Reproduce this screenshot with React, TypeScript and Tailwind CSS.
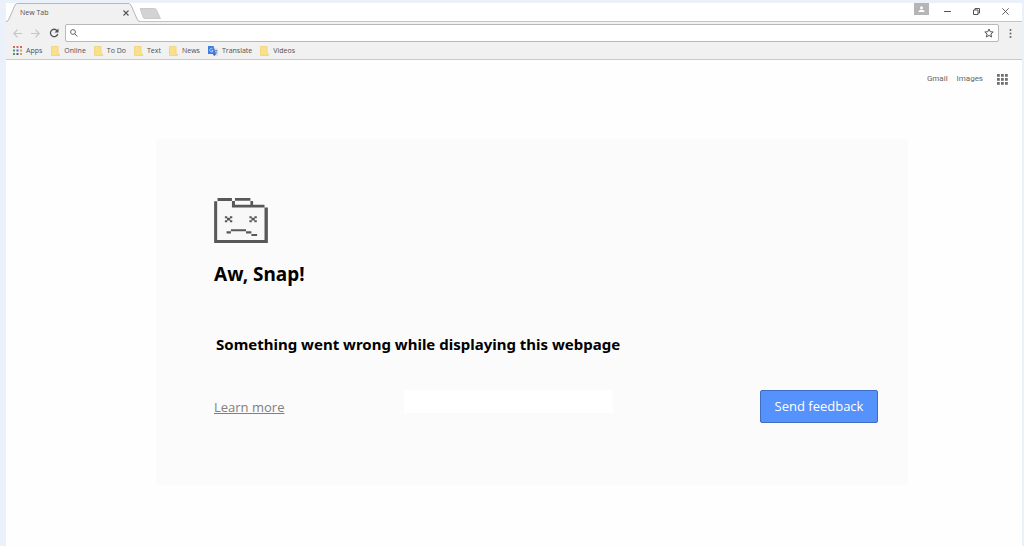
import React from "react";

const bookmarks = ["Online", "To Do", "Text", "News"];

function FolderIcon() {
  return (
    <svg width="9" height="10" viewBox="0 0 9 10" aria-hidden="true">
      <path d="M.5.5h6.500v7.500h1.500v1.500h-8z" fill="#fbe08a" stroke="#f0d685" />
    </svg>
  );
}

function AppsIcon() {
  const colors = ["#d9665c", "#d9665c", "#d9665c", "#4c9a63", "#4a6fc4", "#d9a24e", "#4c9a63", "#4a5a9c", "#d9a24e"];
  return (
    <svg width="9" height="9" viewBox="0 0 9 9" aria-hidden="true">
      {colors.map((c, i) => (
        <rect key={i} x={(i % 3) * 3.5} y={Math.floor(i / 3) * 3.5} width="2" height="2" fill={c} />
      ))}
    </svg>
  );
}

function TranslateIcon() {
  return (
    <svg width="10" height="10" viewBox="0 0 10 10" aria-hidden="true">
      <path d="M4 2.500h5.500v7.500H6z" fill="#d5dbe4" />
      <path d="M0 0h5.500l2.500 8H0z" fill="#3d7de0" />
      <path d="M4.600 3A1.700 1.700 0 1 0 5 4.600H3.500" fill="none" stroke="#cfe0fa" strokeWidth=".8" />
      <path d="M6.500 4.500h3M8 4v.7M9 4.700C8.600 6.200 7.800 7 7 7.600M7.500 5.800l1.700 2" fill="none" stroke="#6b7f9e" strokeWidth=".7" />
      <path d="M5 8h3L6 10z" fill="#2a56b0" />
    </svg>
  );
}

function BrokenFolder() {
  return (
    <svg width="54" height="45" viewBox="0 0 160 134" fill="#58585a" role="img" aria-label="Crashed page">
      <path d="M8 10H52V28H150V126H8z" fill="#f8f8f8" />
      <path d="M0 10h9v124H0zM10 0h43v9H10zM53 9h9v11h-9zM62 0h46v8H62zM108 9h8v11h-8zM53 20h97v8H53zM150 28h10v106h-10zM0 125h160v9H0z" />
      {[32, 105].map((x) => (
        <g key={x} transform={`translate(${x} 54)`}>
          <path d="M0 0h7v6H0zM15 0h7v6h-7zM6 5h10v8H6zM0 12h7v6H0zM15 12h7v6h-7z" />
        </g>
      ))}
      <path d="M50 93h45v6H50zM37 99h13v7H37zM95 99h16v7H95zM111 107h17v6h-17z" />
    </svg>
  );
}

export default function App() {
  return (
    <div className="flex min-h-screen flex-col bg-[#ebf1fb] pt-[3px] pr-[2px] pl-[6px] font-['Open_Sans','Noto_Sans',sans-serif] text-[#505050]">
      <header>
        <div className="flex h-[19px] items-start justify-between border-b border-[#c4c4c4] bg-white">
          <div className="flex">
            <div className="relative h-[19px] w-[134px]">
              <svg className="absolute inset-0" width="134" height="19" viewBox="0 0 134 19" aria-hidden="true">
                <path d="M1 19L9 2Q10 .5 12 .5H122Q124 .5 125 2L133 19z" fill="#f1f1f1" />
                <path d="M0 18.500Q2 18.500 3 16L9 2Q10 .5 12 .5H122Q124 .5 125 2L131 16Q132 18.500 134 18.500" fill="none" stroke="#b8b8b8" />
              </svg>
              <div className="relative flex h-[19px] items-center justify-between pr-[11px] pl-[14px]">
                <span className="text-[7px] leading-[19px]">New Tab</span>
                <button aria-label="Close tab" className="flex">
                  <svg width="6" height="6" viewBox="0 0 6 6" stroke="#555" strokeWidth="1.100">
                    <path d="M.5.5l5 5M5.500.5l-5 5" />
                  </svg>
                </button>
              </div>
            </div>
            <button aria-label="New tab" className="flex pt-[5px]">
              <svg width="21" height="11" viewBox="0 0 21 11">
                <path d="M0 .5H14.500Q16 .5 16.500 2L20.500 10.500H5Q3.500 10.500 3 9z" fill="#d3d3d3" stroke="#cacaca" />
              </svg>
            </button>
          </div>
          <div className="flex items-start pr-[13px]">
            <button aria-label="Profile" className="flex h-[12px] w-[15px] items-center justify-center bg-[#b5b5b5]">
              <svg width="7" height="7" viewBox="0 0 7 7" fill="#fff">
                <circle cx="3.500" cy="1.700" r="1.500" />
                <path d="M.5 6V5Q3.500 2.500 6.500 5v1z" />
              </svg>
            </button>
            <div className="flex gap-[22px] pt-[5px] pl-[15px]">
              <button aria-label="Minimize">
                <svg width="7" height="7" viewBox="0 0 7 7" stroke="#555"><path d="M0 3.500h7" /></svg>
              </button>
              <button aria-label="Restore">
                <svg width="7" height="7" viewBox="0 0 7 7" fill="none" stroke="#555"><path d="M.5 2h4.500v4.500H.5zM2 2V.5h4.500V5H5" /></svg>
              </button>
              <button aria-label="Close window">
                <svg width="7" height="7" viewBox="0 0 7 7" stroke="#555" strokeWidth=".9"><path d="M.3.3l6.400 6.400M6.700.3L.3 6.700" /></svg>
              </button>
            </div>
          </div>
        </div>

        <div className="border-b border-[#c9c9c9] bg-[#f1f1f1] pt-[2px]">
          <div className="flex h-[18px] items-center pr-[10px] pl-[7px]">
            <div className="flex w-[52px] items-center gap-[9px]">
              <button aria-label="Back">
                <svg width="9" height="9" viewBox="0 0 9 9" fill="none" stroke="#c6c6c6" strokeWidth="1.200"><path d="M9 4.500H1M4.500.7L.8 4.500l3.700 3.800" /></svg>
              </button>
              <button aria-label="Forward">
                <svg width="9" height="9" viewBox="0 0 9 9" fill="none" stroke="#c6c6c6" strokeWidth="1.200"><path d="M0 4.500h8M4.500.7l3.700 3.800-3.700 3.800" /></svg>
              </button>
              <button aria-label="Reload">
                <svg width="10" height="10" viewBox="0 0 10 10"><path d="M8 2.600A3.700 3.700 0 1 0 8.700 6" fill="none" stroke="#505050" strokeWidth="1.300" /><path d="M9.500.5v4h-4z" fill="#505050" /></svg>
              </button>
            </div>
            <div className="flex h-[18px] flex-1 items-center rounded-[2px] border border-[#b8b8b8] bg-white pr-[4px] pl-[4px]">
              <svg width="8" height="8" viewBox="0 0 8 8" fill="none" stroke="#666" aria-hidden="true">
                <circle cx="3" cy="3" r="2.400" />
                <path d="M4.800 4.800l2.700 2.700" />
              </svg>
              <input aria-label="Address and search" className="h-[14px] min-w-0 flex-1 px-1 text-[8px] outline-none" />
              <button aria-label="Bookmark this page">
                <svg width="10" height="10" viewBox="0 0 10 10" fill="none" stroke="#555"><path d="M5 1l1.200 2.700 3 .3-2.300 2 .7 3L5 7.400 2.400 9l.7-3L.8 4l3-.3z" /></svg>
              </button>
            </div>
            <button aria-label="Browser menu" className="ml-[10px]">
              <svg width="3" height="9" viewBox="0 0 3 9" fill="#666"><circle cx="1.500" cy="1" r="1" /><circle cx="1.500" cy="4.500" r="1" /><circle cx="1.500" cy="8" r="1" /></svg>
            </button>
          </div>
          <nav aria-label="Bookmarks" className="flex h-[17px] items-center gap-[8px] pl-[7px] text-[7px] leading-[17px]">
            <a href="#apps" className="flex items-center gap-[4px] pr-px"><AppsIcon />Apps</a>
            {bookmarks.map((b) => (
              <a key={b} href={`#${b}`} className="flex items-center gap-[4px]"><FolderIcon />{b}</a>
            ))}
            <a href="#translate" className="flex items-center gap-[4px]"><TranslateIcon />Translate</a>
            <a href="#videos" className="flex items-center gap-[4px]"><FolderIcon />Videos</a>
          </nav>
        </div>
      </header>

      <main className="flex-1 bg-[#fefefe]">
        <nav aria-label="Google services" className="flex items-center justify-end gap-[9px] pt-[13px] pr-[14px] font-[Roboto,sans-serif] text-[8px] leading-[12px] text-[#666]">
          <a href="#gmail">Gmail</a>
          <a href="#images">Images</a>
          <button aria-label="Google apps" className="ml-[5px]">
            <svg width="11" height="11" viewBox="0 0 11 11" fill="#707070">
              {[0, 4, 8].map((y) => [0, 4, 8].map((x) => <rect key={`${x}-${y}`} x={x} y={y} width="2.800" height="2.800" />))}
            </svg>
          </button>
        </nav>

        <div className="mt-[54px] flex justify-center pl-[36px]">
          <section className="w-[77%] max-w-[752px] bg-[#fbfbfb] pt-[59px] pr-[30px] pb-[62px] pl-[58px]">
            <BrokenFolder />
            <h1 className="mt-[17px] font-['Noto_Sans',sans-serif] text-[19px] leading-[28px] font-bold text-black">Aw, Snap!</h1>
            <p className="mt-[44px] pl-[2px] font-['Noto_Sans',sans-serif] text-[15px] leading-[24px] font-bold text-black">
              Something went wrong while displaying this webpage
            </p>
            <div className="mt-[34px] flex items-start justify-between">
              <a href="#learn-more" className="mt-[7px] text-[13px] leading-[20px] text-[#808080] underline">Learn more</a>
              <div className="mr-[28px] h-[23px] w-[209px] bg-white" />
              <button className="h-[33px] w-[118px] rounded-[2px] border border-[#3f6cc4] bg-[#5592fb] text-[13px] text-white">Send feedback</button>
            </div>
          </section>
        </div>
      </main>
    </div>
  );
}
